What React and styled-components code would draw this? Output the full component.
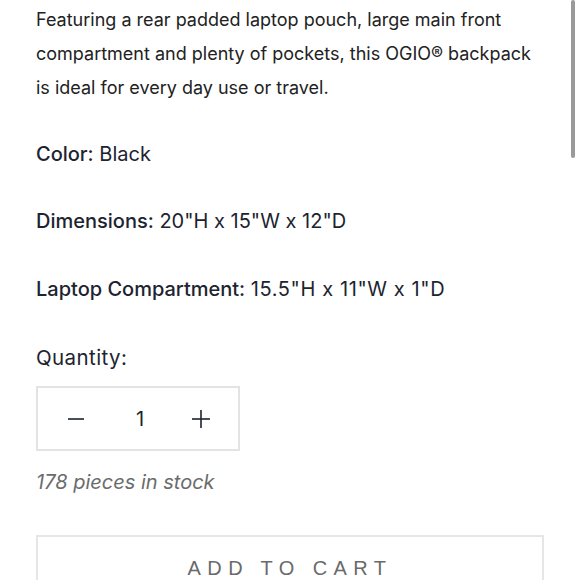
import React from "react";
import styled, { createGlobalStyle } from "styled-components";

const Global = createGlobalStyle`
  html, body { margin: 0; padding: 0; background: #fff; overflow: hidden; }
  body { font-family: Inter, "Noto Sans", sans-serif; color: #1f2328; }
`;

const Page = styled.div`
  position: relative;
  width: 580px;
  height: 580px;
  overflow: hidden;
  background: #fff;
`;

const Content = styled.div`
  padding: 3px 36px 0 36px;
  display: flex;
  flex-direction: column;
`;

const Description = styled.p`
  margin: 0;
  font-size: 18px;
  line-height: 34px;
  color: #222;
  width: 500px;
`;

const Spec = styled.p`
  margin: ${(p) => p.$top}px 0 0 0;
  font-size: 20px;
  line-height: 28px;
  color: #1c2430;
`;

const SpecLabel = styled.span`
  font-weight: 500;
`;

const SpecValue = styled.span`
  letter-spacing: ${(p) => p.$ls || 0}px;
`;

const QtyLabel = styled.div`
  margin-top: 41px;
  font-size: 20.5px;
  line-height: 28px;
  letter-spacing: 0.4px;
  color: #1c2430;
`;

const QtyBox = styled.div`
  margin-top: 14px;
  width: 204px;
  height: 65px;
  box-sizing: border-box;
  border: 2px solid #e3e3e3;
  display: flex;
  align-items: center;
  justify-content: space-between;
  padding: 0 28px 0 30px;
`;

const QtyIcon = styled.svg`
  display: block;
  stroke: #1c2430;
  stroke-width: 1.6;
  fill: none;
`;

const QtyValue = styled.span`
  font-size: 20px;
  color: #1c2430;
  margin-left: 4px;
`;

const Stock = styled.div`
  margin-top: 19px;
  font-size: 20px;
  line-height: 24px;
  font-style: italic;
  color: #6b6b6b;
`;

const CartButton = styled.div`
  margin-top: 41px;
  width: 508px;
  height: 45px;
  box-sizing: border-box;
  border: 2px solid #e6e6e6;
  border-bottom: none;
  display: flex;
  justify-content: center;
  padding-top: 20px;
  padding-left: 0;
  font-family: "Liberation Sans", Arial, sans-serif;
  font-size: 20px;
  line-height: 22px;
  letter-spacing: 6.4px;
  color: #6a6a6a;
`;

const Scrollbar = styled.div`
  position: absolute;
  right: 5px;
  top: 0;
  width: 4px;
  height: 158px;
  background: #9a9a9a;
  border-radius: 2px;
`;

export default function App() {
  return (
    <Page>
      <Global />
      <Content>
        <Description>
          Featuring a rear padded laptop pouch, large main front compartment and
          plenty of pockets, this OGIO® backpack is ideal for every day use or
          travel.
        </Description>
        <Spec $top={35}>
          <SpecLabel>Color:</SpecLabel> Black
        </Spec>
        <Spec $top={39}>
          <SpecLabel>Dimensions:</SpecLabel> 20"H x 15"W x 12"D
        </Spec>
        <Spec $top={40}>
          <SpecLabel>Laptop Compartment:</SpecLabel>{" "}
          <SpecValue $ls={0.6}>15.5"H x 11"W x 1"D</SpecValue>
        </Spec>
        <QtyLabel>Quantity:</QtyLabel>
        <QtyBox>
          <QtyIcon width="16" height="18" viewBox="0 0 16 18">
            <line x1="0" y1="9" x2="16" y2="9" />
          </QtyIcon>
          <QtyValue>1</QtyValue>
          <QtyIcon width="18" height="18" viewBox="0 0 18 18">
            <line x1="0" y1="9" x2="18" y2="9" />
            <line x1="9" y1="0" x2="9" y2="18" />
          </QtyIcon>
        </QtyBox>
        <Stock>178 pieces in stock</Stock>
        <CartButton>ADD TO CART</CartButton>
      </Content>
      <Scrollbar />
    </Page>
  );
}
